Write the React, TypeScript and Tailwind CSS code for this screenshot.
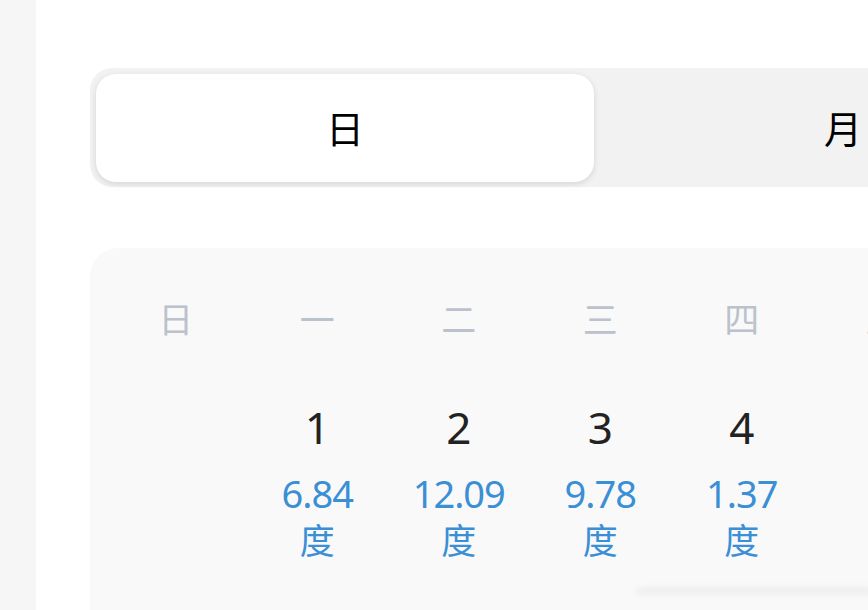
import React from 'react';

const weekdays = ['日', '一', '二', '三', '四', '五', '六'];

const days = [
  { day: '', value: '' },
  { day: '1', value: '6.84' },
  { day: '2', value: '12.09' },
  { day: '3', value: '9.78' },
  { day: '4', value: '1.37' },
  { day: '5', value: '' },
  { day: '6', value: '' },
];

const font = { fontFamily: '"Noto Sans", "Noto Sans CJK SC", sans-serif' };

export default function App() {
  return (
    <div className="relative flex h-[610px] w-[868px] overflow-hidden bg-white" style={font}>
      <div className="h-full w-[36px] shrink-0 bg-[#f6f6f6]" />

      <main className="flex-1 pl-[54px] pt-[68px]">
        {/* tabs */}
        <div className="flex h-[119px] w-[1008px] rounded-[22px] bg-[#f2f2f2] p-[6px]">
          <button className="flex h-[108px] w-[498px] shrink-0 items-center justify-center rounded-[20px] bg-white text-[38px] text-black shadow-[0_2px_6px_rgba(0,0,0,0.12)]">
            日
          </button>
          <button className="flex h-[108px] w-[498px] shrink-0 items-center justify-center text-[38px] text-black">
            月
          </button>
        </div>

        {/* calendar */}
        <div className="mt-[61px] h-[400px] w-[1020px] rounded-[28px] bg-[#f9f9fa] px-[15px] pt-[48px]">
          <div className="grid grid-cols-[repeat(7,141.5px)]">
            {weekdays.map((w) => (
              <div key={w} className="flex h-[48px] items-center justify-center text-[35px] text-[#bcc2cb]">
                {w}
              </div>
            ))}
          </div>

          <div className="mt-[55px] grid grid-cols-[repeat(7,141.5px)]">
            {days.map(({ day, value }, i) => (
              <div key={i} className="flex flex-col items-center">
                <div className="flex h-[56px] items-center text-[44px] text-[#222]">{day}</div>
                {value && (
                  <div className="mt-[14px] flex flex-col items-center text-[#3b8fd5]">
                    <span className="flex h-[48px] items-center text-[38px] tracking-[-1px]">{value}</span>
                    <span className="flex h-[48px] items-center text-[35px]">度</span>
                  </div>
                )}
              </div>
            ))}
          </div>
        </div>
      </main>

      <div className="absolute left-[636px] top-[588px] h-[6px] w-[240px] rounded-full bg-[#e6e6e6] opacity-70 blur-[3px]" />
    </div>
  );
}
